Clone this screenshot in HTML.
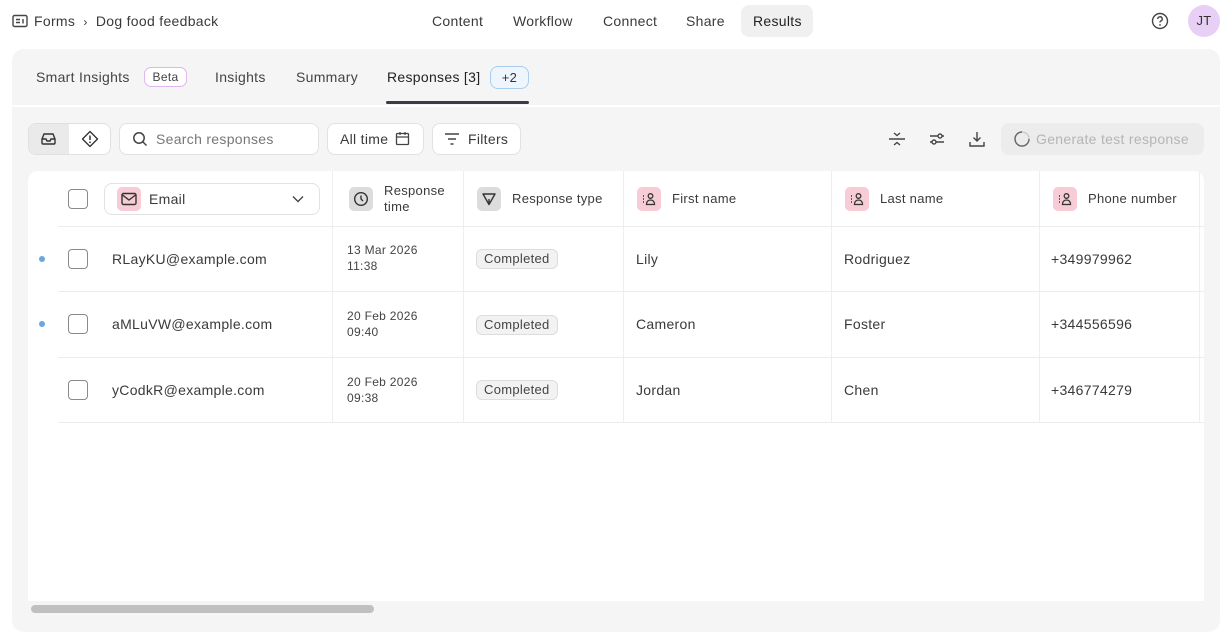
<!DOCTYPE html>
<html><head><meta charset="utf-8"><style>
*{box-sizing:border-box;margin:0;padding:0}
body{width:1222px;height:636px;background:#fff;font-family:"Liberation Sans",sans-serif;color:#3a3a3a;position:relative;overflow:hidden;font-size:14px;letter-spacing:0.3px}
.a{position:absolute}
.nav span{position:absolute;top:13px;font-size:14px;color:#3a3a3a}
.panel{left:12px;top:49px;width:1208px;height:583px;background:#f5f5f5;border-radius:12px}
.tab{position:absolute;top:69px;font-size:14px;color:#444}
.btn{position:absolute;top:123px;height:32px;background:#fff;border:1px solid #e2e2e2;border-radius:8px}
.table{left:28px;top:171px;width:1176px;height:430px;background:#fff;border-radius:10px 10px 0 0;overflow:hidden}
.vl{position:absolute;top:0;width:1px;height:252px;background:#eee}
.hl{position:absolute;left:30px;width:1146px;height:1px;background:#ececec}
.cb{position:absolute;width:20px;height:20px;border:1.5px solid #8a8a8a;border-radius:4px;background:#fff}
.hdr{position:absolute;font-size:13px;color:#3a3a3a}
.ic{position:absolute;width:24px;height:24px;border-radius:5px;background:#f7ccd6;top:15px}
.ig{background:#dcdcdc}
.cell{position:absolute;font-size:14px;color:#3a3a3a}
.dt{position:absolute;font-size:12px;color:#444;line-height:16px}
.pill{position:absolute;font-size:13px;color:#444;background:#f2f2f2;border:1px solid #ddd;border-radius:6px;padding:1px 7px;height:20px;line-height:16px}
.dot{position:absolute;left:11px;width:6px;height:6px;border-radius:50%;background:#6aa6e0}
</style></head><body>
<svg class="a" style="left:12px;top:14px" width="16" height="14" viewBox="0 0 16 14"><rect x="1" y="1.5" width="14" height="11" rx="1.5" fill="none" stroke="#444" stroke-width="1.4"/><path d="M4 5.5h4M4 8.5h4M11 5v4.5" stroke="#444" stroke-width="1.4"/></svg>
<div class="a" style="left:34px;top:13px;font-size:14px;color:#3a3a3a">Forms <span style="margin:0 4px;font-size:12px">›</span> Dog food feedback</div>
<div class="nav">
<span style="left:432px">Content</span><span style="left:513px">Workflow</span><span style="left:603px">Connect</span><span style="left:686px">Share</span>
</div>
<div class="a" style="left:741px;top:5px;width:72px;height:32px;background:#f0f0f0;border-radius:8px"></div>
<span class="a" style="left:753px;top:13px;font-size:14px;color:#222">Results</span>
<svg class="a" style="left:1151px;top:12px" width="18" height="18" viewBox="0 0 18 18"><circle cx="9" cy="9" r="7.5" fill="none" stroke="#444" stroke-width="1.4"/><path d="M6.8 7a2.2 2.2 0 1 1 3 2c-.7.3-.8.8-.8 1.5" fill="none" stroke="#444" stroke-width="1.4"/><circle cx="9" cy="13" r=".9" fill="#444"/></svg>
<div class="a" style="left:1188px;top:5px;width:32px;height:32px;border-radius:50%;background:#e8cff5;font-size:13px;color:#333;text-align:center;line-height:32px">JT</div>

<div class="a panel"></div>
<span class="tab" style="left:36px">Smart Insights</span>
<div class="a" style="left:144px;top:67px;width:43px;height:20px;border:1px solid #e0b5f0;border-radius:7px;background:#fff;font-size:12px;color:#444;text-align:center;line-height:18px">Beta</div>
<span class="tab" style="left:215px">Insights</span>
<span class="tab" style="left:296px">Summary</span>
<span class="tab" style="left:387px;color:#222">Responses [3]</span>
<div class="a" style="left:490px;top:66px;width:39px;height:23px;border:1px solid #a8cdee;border-radius:8px;background:#eef5fc;font-size:13px;color:#333;text-align:center;line-height:21px">+2</div>
<div class="a" style="left:386px;top:101px;width:143px;height:3px;background:#3e3b45;border-radius:2px"></div>
<div class="a" style="left:12px;top:105px;width:1208px;height:2px;background:#fff"></div>

<div class="a" style="left:28px;top:123px;width:83px;height:32px;border:1px solid #e0e0e0;border-radius:8px;background:#fff;overflow:hidden"><div style="width:40px;height:32px;background:#eaeaea"></div></div>
<svg class="a" style="left:40px;top:131px" width="17" height="16" viewBox="0 0 17 16"><path d="M2 8l2-5h9l2 5v4a1 1 0 0 1-1 1H3a1 1 0 0 1-1-1z M2 8h4l1 2h3l1-2h4" fill="none" stroke="#333" stroke-width="1.4"/></svg>
<svg class="a" style="left:81px;top:130px" width="18" height="18" viewBox="0 0 18 18"><path d="M9 1.5L16.5 9 9 16.5 1.5 9z" fill="none" stroke="#333" stroke-width="1.4" stroke-linejoin="round"/><path d="M9 5.5v4.5" stroke="#333" stroke-width="1.5"/><circle cx="9" cy="12.3" r=".9" fill="#333"/></svg>
<div class="btn" style="left:119px;width:200px"></div>
<svg class="a" style="left:132px;top:131px" width="16" height="16" viewBox="0 0 16 16"><circle cx="7" cy="7" r="5.2" fill="none" stroke="#444" stroke-width="1.5"/><path d="M11 11l3.5 3.5" stroke="#444" stroke-width="1.5"/></svg>
<span class="a" style="left:156px;top:131px;color:#777">Search responses</span>
<div class="btn" style="left:327px;width:97px"></div>
<span class="a" style="left:340px;top:131px">All time</span>
<svg class="a" style="left:395px;top:131px" width="15" height="15" viewBox="0 0 15 15"><rect x="1.5" y="2.5" width="12" height="11" rx="1" fill="none" stroke="#444" stroke-width="1.3"/><path d="M1.5 6h12M5 1v3M10 1v3" stroke="#444" stroke-width="1.3"/></svg>
<div class="btn" style="left:432px;width:89px"></div>
<svg class="a" style="left:444px;top:132px" width="16" height="14" viewBox="0 0 16 14"><path d="M1 2h14M4 7h8M6.5 12h3" stroke="#444" stroke-width="1.4"/></svg>
<span class="a" style="left:468px;top:131px">Filters</span>

<svg class="a" style="left:888px;top:130px" width="18" height="18" viewBox="0 0 18 18"><path d="M1 9h16M6 3l3 2.5L12 3M6 15l3-2.5L12 15" fill="none" stroke="#444" stroke-width="1.4"/></svg>
<svg class="a" style="left:928px;top:130px" width="18" height="18" viewBox="0 0 18 18"><path d="M2 6h8M14 6h2M2 12h2M8 12h8" stroke="#444" stroke-width="1.4"/><circle cx="12" cy="6" r="2" fill="none" stroke="#444" stroke-width="1.4"/><circle cx="6" cy="12" r="2" fill="none" stroke="#444" stroke-width="1.4"/></svg>
<svg class="a" style="left:968px;top:130px" width="18" height="18" viewBox="0 0 18 18"><path d="M9 2v9M5.5 7.5L9 11l3.5-3.5M2 12v4h14v-4" fill="none" stroke="#444" stroke-width="1.4"/></svg>
<div class="a" style="left:1001px;top:123px;width:203px;height:32px;background:#ececec;border-radius:8px"></div>
<svg class="a" style="left:1013px;top:130px" width="18" height="18" viewBox="0 0 18 18"><path d="M9 2a7 7 0 1 0 7 7" fill="none" stroke="#666" stroke-width="1.4"/><path d="M16 9a7 7 0 0 0-7-7" fill="none" stroke="#ccc" stroke-width="1.4"/></svg>
<span class="a" style="left:1036px;top:131px;color:#b5b5b5">Generate test response</span>

<div class="a table">
<div class="vl" style="left:304px"></div><div class="vl" style="left:435px"></div><div class="vl" style="left:595px"></div><div class="vl" style="left:803px"></div><div class="vl" style="left:1011px"></div><div class="vl" style="left:1171px"></div>
<div class="hl" style="top:55px"></div><div class="hl" style="top:120px"></div><div class="hl" style="top:186px"></div><div class="hl" style="top:251px"></div>
<div class="cb" style="left:40px;top:18px"></div>
<div style="position:absolute;left:76px;top:12px;width:216px;height:32px;border:1px solid #e2e2e2;border-radius:8px"></div>
<div class="ic" style="left:89px;top:16px"></div>
<svg class="a" style="left:93px;top:21px" width="16" height="14" viewBox="0 0 16 14"><rect x="1" y="1.5" width="14" height="11" rx="1.5" fill="none" stroke="#333" stroke-width="1.4"/><path d="M1.5 3l6.5 5 6.5-5" fill="none" stroke="#333" stroke-width="1.4"/></svg>
<span class="hdr" style="left:121px;top:20px;font-size:14px">Email</span>
<svg class="a" style="left:264px;top:24px" width="12" height="8" viewBox="0 0 12 8"><path d="M1 1.5l5 5 5-5" fill="none" stroke="#444" stroke-width="1.4"/></svg>
<div class="ic ig" style="left:321px;top:16px"></div>
<svg class="a" style="left:325px;top:20px" width="16" height="16" viewBox="0 0 16 16"><circle cx="8" cy="8" r="6.3" fill="none" stroke="#333" stroke-width="1.4"/><path d="M8 4.5V8l2 2" fill="none" stroke="#333" stroke-width="1.4"/></svg>
<span class="hdr" style="left:356px;top:12px;line-height:16px">Response<br>time</span>
<div class="ic ig" style="left:449px;top:16px"></div>
<svg class="a" style="left:453px;top:20px" width="16" height="16" viewBox="0 0 16 16"><path d="M2 3h12L8 13.5z M8 13.5V8" fill="none" stroke="#333" stroke-width="1.4" stroke-linejoin="round"/></svg>
<span class="hdr" style="left:484px;top:20px">Response type</span>
<div class="ic" style="left:609px;top:16px"></div>
<svg class="a" style="left:613px;top:20px" width="16" height="16" viewBox="0 0 16 16"><path d="M2 5h1M2 8h1M2 11h1" stroke="#333" stroke-width="1.4"/><circle cx="9.5" cy="5" r="2.3" fill="none" stroke="#333" stroke-width="1.3"/><path d="M5.5 13.5c0-3 1.8-4.5 4-4.5s4 1.5 4 4.5z" fill="none" stroke="#333" stroke-width="1.3"/></svg>
<span class="hdr" style="left:644px;top:20px">First name</span>
<div class="ic" style="left:817px;top:16px"></div>
<svg class="a" style="left:821px;top:20px" width="16" height="16" viewBox="0 0 16 16"><path d="M2 5h1M2 8h1M2 11h1" stroke="#333" stroke-width="1.4"/><circle cx="9.5" cy="5" r="2.3" fill="none" stroke="#333" stroke-width="1.3"/><path d="M5.5 13.5c0-3 1.8-4.5 4-4.5s4 1.5 4 4.5z" fill="none" stroke="#333" stroke-width="1.3"/></svg>
<span class="hdr" style="left:852px;top:20px">Last name</span>
<div class="ic" style="left:1025px;top:16px"></div>
<svg class="a" style="left:1029px;top:20px" width="16" height="16" viewBox="0 0 16 16"><path d="M2 5h1M2 8h1M2 11h1" stroke="#333" stroke-width="1.4"/><circle cx="9.5" cy="5" r="2.3" fill="none" stroke="#333" stroke-width="1.3"/><path d="M5.5 13.5c0-3 1.8-4.5 4-4.5s4 1.5 4 4.5z" fill="none" stroke="#333" stroke-width="1.3"/></svg>
<span class="hdr" style="left:1060px;top:20px">Phone number</span>

<div class="dot" style="top:85px"></div>
<div class="cb" style="left:40px;top:78px"></div>
<span class="cell" style="left:84px;top:80px">RLayKU@example.com</span>
<div class="dt" style="left:319px;top:71px">13 Mar 2026<br>11:38</div>
<div class="pill" style="left:448px;top:78px">Completed</div>
<span class="cell" style="left:608px;top:80px">Lily</span>
<span class="cell" style="left:816px;top:80px">Rodriguez</span>
<span class="cell" style="left:1023px;top:80px">+349979962</span>

<div class="dot" style="top:150px"></div>
<div class="cb" style="left:40px;top:143px"></div>
<span class="cell" style="left:84px;top:145px">aMLuVW@example.com</span>
<div class="dt" style="left:319px;top:137px">20 Feb 2026<br>09:40</div>
<div class="pill" style="left:448px;top:144px">Completed</div>
<span class="cell" style="left:608px;top:145px">Cameron</span>
<span class="cell" style="left:816px;top:145px">Foster</span>
<span class="cell" style="left:1023px;top:145px">+344556596</span>

<div class="cb" style="left:40px;top:209px"></div>
<span class="cell" style="left:84px;top:211px">yCodkR@example.com</span>
<div class="dt" style="left:319px;top:203px">20 Feb 2026<br>09:38</div>
<div class="pill" style="left:448px;top:209px">Completed</div>
<span class="cell" style="left:608px;top:211px">Jordan</span>
<span class="cell" style="left:816px;top:211px">Chen</span>
<span class="cell" style="left:1023px;top:211px">+346774279</span>
</div>
<div class="a" style="left:31px;top:605px;width:343px;height:8px;border-radius:4px;background:#c1bfc2"></div>
</body></html>
